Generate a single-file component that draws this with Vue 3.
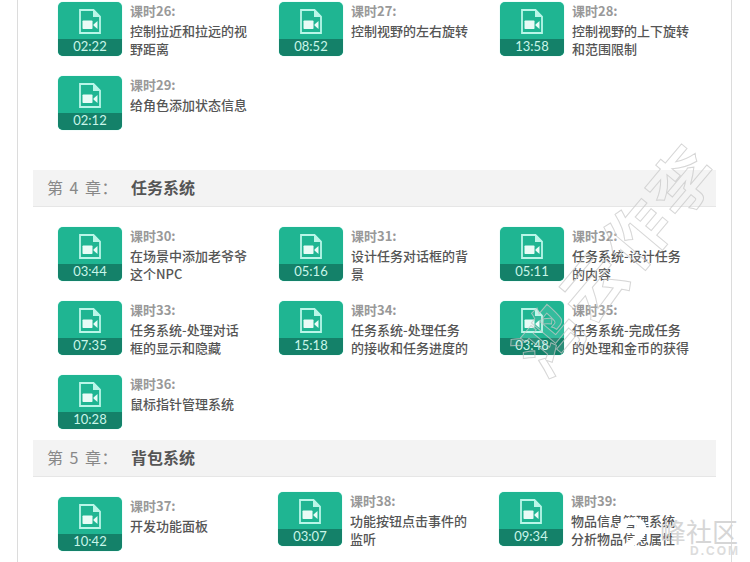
<script setup>
const chapters = [
  {
    id: 3,
    lessons: [
      { no: 26, time: '02:22', title: '控制拉近和拉远的视野距离' },
      { no: 27, time: '08:52', title: '控制视野的左右旋转' },
      { no: 28, time: '13:58', title: '控制视野的上下旋转和范围限制' },
      { no: 29, time: '02:12', title: '给角色添加状态信息' },
    ],
  },
  {
    id: 4,
    name: '任务系统',
    lessons: [
      { no: 30, time: '03:44', title: '在场景中添加老爷爷这个NPC' },
      { no: 31, time: '05:16', title: '设计任务对话框的背景' },
      { no: 32, time: '05:11', title: '任务系统-设计任务的内容' },
      { no: 33, time: '07:35', title: '任务系统-处理对话框的显示和隐藏' },
      { no: 34, time: '15:18', title: '任务系统-处理任务的接收和任务进度的更新' },
      { no: 35, time: '03:48', title: '任务系统-完成任务的处理和金币的获得' },
      { no: 36, time: '10:28', title: '鼠标指针管理系统' },
    ],
  },
  {
    id: 5,
    name: '背包系统',
    lessons: [
      { no: 37, time: '10:42', title: '开发功能面板' },
      { no: 38, time: '03:07', title: '功能按钮点击事件的监听', shifted: true },
      { no: 39, time: '09:34', title: '物品信息管理系统-分析物品信息属性', shifted: true },
    ],
  },
]
</script>

<template>
  <div class="page">
    <div class="panel">
      <section v-for="chapter in chapters" :key="chapter.id" class="chapter" :class="'chapter-' + chapter.id">
        <header v-if="chapter.name" class="chapter-head">
          <span class="chapter-no">第 {{ chapter.id }} 章：</span>
          <h2 class="chapter-name">{{ chapter.name }}</h2>
        </header>
        <ul class="lessons">
          <li v-for="lesson in chapter.lessons" :key="lesson.no" class="lesson" :class="{ shifted: lesson.shifted }">
            <div class="thumb">
              <div class="thumb-icon">
                <svg width="22" height="25" viewBox="0 0 22 25">
                  <path d="M1 1h13.500l6.500 6.500V24H1z" fill="none" stroke="#b9f6e8" stroke-width="1.800" />
                  <path d="M14 1v7h7" fill="#b9f6e8" />
                  <rect x="3.500" y="11.500" width="10" height="8.500" rx="0.800" fill="#e9fbf6" />
                  <path d="M14.500 15.500l4-3.500v8l-4-3.500z" fill="#e9fbf6" />
                </svg>
              </div>
              <div class="thumb-time">{{ lesson.time }}</div>
            </div>
            <div class="info">
              <div class="lesson-no">课时{{ lesson.no }}:</div>
              <div class="lesson-title">{{ lesson.title }}</div>
            </div>
          </li>
        </ul>
      </section>
    </div>
    <div class="watermark">鸿云作李</div>
    <div class="logo">
      <span class="logo-mark">2</span>
      <span class="logo-name">峰社区</span>
      <span class="logo-url">D.COM</span>
    </div>
  </div>
</template>

<style>
html,
body {
  margin: 0;
  background: #fff;
  overflow: hidden;
}
</style>

<style scoped>
.page {
  position: relative;
  width: 750px;
  height: 562px;
  overflow: hidden;
  font-family: "Noto Sans CJK SC", "Liberation Sans", sans-serif;
}

.panel {
  box-sizing: border-box;
  width: 715px;
  height: 562px;
  margin-left: 17px;
  padding: 2px 15px 0;
  border-left: 1px solid #dcdcdc;
  border-right: 1px solid #dcdcdc;
}

.chapter-4 {
  margin-top: 40px;
}

.chapter-5 {
  margin-top: 11px;
}

.chapter-head {
  display: flex;
  align-items: center;
  box-sizing: border-box;
  width: 683px;
  height: 37px;
  padding: 0 0 2px 14px;
  background: #f3f3f3;
  border-bottom: 1px solid #e6e6e6;
}

.chapter-no {
  width: 84px;
  font-size: 16px;
  word-spacing: 2px;
  letter-spacing: 0.5px;
  white-space: nowrap;
  color: #888;
}

.chapter-name {
  margin: 0;
  font-size: 16px;
  font-weight: 700;
  color: #555;
}

.lessons {
  display: grid;
  grid-template-columns: repeat(3, 221px);
  grid-auto-rows: 54px;
  row-gap: 20px;
  margin: 0;
  padding: 0 0 0 25px;
  list-style: none;
}

.chapter-head + .lessons {
  margin-top: 20px;
}

.lesson {
  display: flex;
  gap: 8px;
}

.shifted {
  transform: translate(-1px, -5px);
}

.thumb {
  display: flex;
  flex-direction: column;
  flex: none;
  width: 64px;
  height: 54px;
  overflow: hidden;
  border-radius: 5px;
  background: #1fb592;
  box-shadow: 0 0 1px #7fe6cf;
}

.thumb-icon {
  display: flex;
  justify-content: center;
  flex: 1;
  padding-top: 7px;
}

.thumb-time {
  height: 17px;
  font-family: Lato, "Open Sans", sans-serif;
  font-size: 13px;
  line-height: 15px;
  text-align: center;
  color: #c9f6ea;
  background: #148169;
}

.info {
  width: 118px;
}

.lesson-no {
  margin-bottom: 2px;
  font-size: 13px;
  font-weight: 700;
  line-height: 18px;
  color: #999;
}

.lesson-title {
  max-height: 36px;
  overflow: hidden;
  font-size: 13px;
  font-weight: 500;
  line-height: 18px;
  color: #555;
}

.watermark {
  position: absolute;
  left: 476px;
  top: 222px;
  width: 274px;
  font-size: 64px;
  font-weight: 700;
  letter-spacing: 5px;
  line-height: 70px;
  text-align: center;
  white-space: nowrap;
  color: rgba(255, 255, 255, 0.1);
  -webkit-text-stroke: 1px rgba(200, 200, 200, 0.75);
  transform: rotate(-50deg);
  pointer-events: none;
}

.logo {
  position: absolute;
  right: 0;
  bottom: 0;
  width: 135px;
  height: 42px;
  pointer-events: none;
}

.logo-mark {
  position: absolute;
  left: 0;
  top: -12px;
  font-family: "Liberation Sans", sans-serif;
  font-size: 62px;
  font-weight: 700;
  line-height: 62px;
  color: #fff;
}

.logo-name {
  position: absolute;
  left: 45px;
  top: -4px;
  font-size: 26px;
  line-height: 30px;
  color: #d6d6d6;
}

.logo-url {
  position: absolute;
  left: 75px;
  top: 23px;
  font-family: "Liberation Sans", sans-serif;
  font-size: 12px;
  font-weight: 700;
  letter-spacing: 2px;
  line-height: 16px;
  color: #dcdcdc;
}
</style>
